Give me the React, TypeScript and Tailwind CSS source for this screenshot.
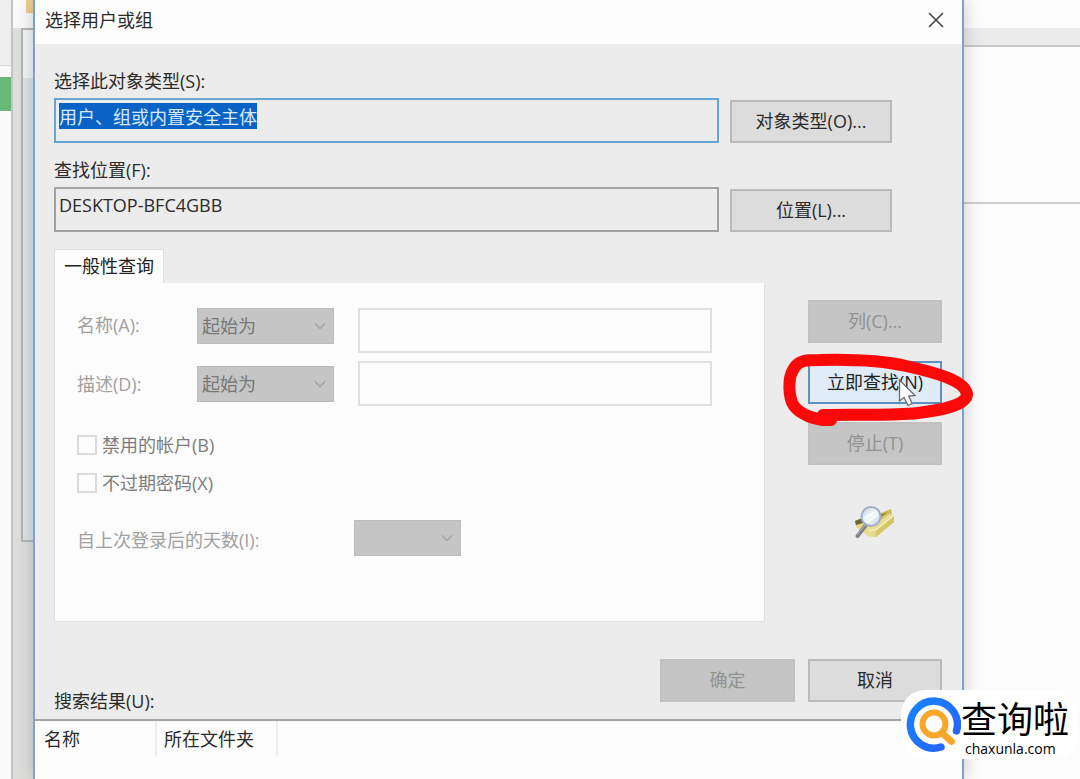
import { useEffect, useRef, type ReactNode } from "react";

const font = "font-['Open_Sans','Noto_Sans_CJK_SC',sans-serif]";

function Chevron() {
  return (
    <svg viewBox="0 0 12 8" className="pointer-events-none absolute top-1/2 right-2 h-2 w-3 -translate-y-1/2" fill="none" stroke="#a3a3a3" strokeWidth="1.3">
      <path d="M1 1.5 L6 6.5 L11 1.5" />
    </svg>
  );
}

function GreySelect({ id, value, width }: { id: string; value: string; width: string }) {
  return (
    <div className={`relative h-9 ${width}`}>
      <select id={id} disabled className="h-full w-full appearance-none border border-[#bcbcbc] bg-[#c5c5c5] pl-1 text-[18px] text-[#777777] opacity-100">
        <option>{value}</option>
      </select>
      <Chevron />
    </div>
  );
}

function PushButton({ children, disabled, hot }: { children: ReactNode; disabled?: boolean; hot?: boolean }) {
  const tone = disabled
    ? "border-[#c1c1c1] bg-[#c5c5c5] text-[#929292]"
    : hot
      ? "border-[#5f90c4] bg-[#e0ebf8] text-[#222222]"
      : "border-[#bababa] bg-[#dcdcdc] text-[#2b2b2b]";
  return (
    <button type="button" disabled={disabled} className={`flex h-[43px] w-full items-center justify-center border-2 pb-px text-[18px] leading-6 ${tone}`}>
      {children}
    </button>
  );
}

function FindIcon() {
  return (
    <svg viewBox="0 0 42 36" className="h-9 w-[42px]">
      <defs>
        <linearGradient id="gold" x1="0" y1="0" x2="1" y2="1">
          <stop offset="0" stopColor="#f4efb4" />
          <stop offset="1" stopColor="#d8c96c" />
        </linearGradient>
        <linearGradient id="lens" x1="0" y1="0" x2="1" y2="1">
          <stop offset="0" stopColor="#c4d4ee" />
          <stop offset="0.5" stopColor="#f1f8fb" />
          <stop offset="1" stopColor="#bccfdd" />
        </linearGradient>
      </defs>
      <path d="M1 16 L12 12 L31 8 L37 4 L40 16 L22 32 L14 31 L2 22 Z" fill="#e2d98c" />
      <path d="M1 16 L8 13 L9 18 L2 20 Z" fill="#6d6630" />
      <path d="M24 9 L37 4 L38 8 L22 20 Z" fill="#d0be58" />
      <path d="M25 10 L34 7 L24 14 Z" fill="#8a7f42" />
      <path d="M14 25 L35 9 L40 11 L40 17 L22 32 L14 31 Z" fill="url(#gold)" />
      <path d="M22 25 L40 11 L40 17 L22 32 Z" fill="#d6c766" />
      <path d="M14 25 L22 25 L39 11" fill="none" stroke="#f8f3c4" strokeWidth="1.2" />
      <path d="M12 20 L3.500 31" stroke="#808088" strokeWidth="4" strokeLinecap="round" />
      <path d="M11 20 L3 30" stroke="#b8b8c0" strokeWidth="1" />
      <circle cx="17" cy="11.500" r="9.500" fill="url(#lens)" stroke="#a3afc8" strokeWidth="2" />
      <path d="M11 13 L20 7 M14 17 L23 10" stroke="#ffffff" strokeWidth="1.5" />
    </svg>
  );
}

function HighlightMark() {
  return (
    <svg viewBox="778 345 200 90" className="pointer-events-none absolute -top-4 -left-[30px] z-10 h-[90px] w-[200px]" fill="none">
      <path
        d="M831 420 C815 421 800 414 794 406 C788 397 788 378 793 370 C798 360 806 360 820 360 C860 359 884 361 906 366 C938 373 965 381 967 394 C967 405 942 410 918 413 C890 416 861 414 823 415"
        stroke="#fb0808"
        strokeWidth="12"
        strokeLinecap="round"
        strokeLinejoin="round"
      />
      <path d="M899.500 380 L899.500 401 L904 397.500 L908 405.500 L912 403.600 L908.800 396 L915 395.500 Z" fill="#ffffff" stroke="#6b6b6b" strokeWidth="1.3" />
    </svg>
  );
}

function SiteBadge() {
  return (
    <div className="absolute right-[3px] bottom-5 z-20 flex h-[69px] w-[176px] items-center rounded-[24px] bg-white pl-1">
      <svg viewBox="0 0 56 58" className="h-[58px] w-14 shrink-0" fill="none" strokeLinecap="round">
        <defs>
          <linearGradient id="ring" x1="0" y1="0" x2="1" y2="1">
            <stop offset="0" stopColor="#1683fb" />
            <stop offset="1" stopColor="#2862ff" />
          </linearGradient>
        </defs>
        <path d="M36 51 A23.500 23.500 0 1 1 51.500 35" stroke="url(#ring)" strokeWidth="7.500" />
        <circle cx="29" cy="28" r="11.500" stroke="#f9a62b" strokeWidth="6" />
        <path d="M37 37 L46.500 45.500" stroke="#f9a62b" strokeWidth="7" />
      </svg>
      <div className="flex flex-col self-start pt-[11px] font-['Liberation_Sans','Noto_Sans_CJK_SC',sans-serif] text-black">
        <span className="text-[36px] leading-[40px] whitespace-nowrap">查询啦</span>
        <span className="pl-1 font-['Open_Sans',sans-serif] text-[14px] leading-4 font-medium">chaxunla.com</span>
      </div>
    </div>
  );
}

function LeftBackdrop() {
  return (
    <div className="flex w-[33px] shrink-0">
      <div className="flex w-[11px] flex-col bg-[#fafafa]">
        <div className="h-[66px] border-b border-[#d8d8d8] bg-[#eeeeee]" />
        <div className="mt-[11px] h-[34px] bg-[#69b878]" />
      </div>
      <div className="flex flex-1 flex-col border-l-2 border-[#c4c4c4] bg-[#dededc]">
        <div className="flex h-7 justify-end bg-[#fafafa]">
          <div className="h-[13px] w-[7px] bg-[#edd08c]" />
        </div>
        <div className="ml-2 h-[514px] border-t-2 border-b-2 border-l-2 border-[#b4b4b4] bg-[#dde2e5]">
          <div className="h-12 bg-[#f3f5f6]" />
        </div>
      </div>
    </div>
  );
}

function RightBackdrop() {
  return (
    <div className="flex w-[116px] shrink-0 flex-col bg-[#fcfcfc]">
      <div className="mt-7 h-[19px] border-b-2 border-[#c6c6c6] bg-[#ebebeb]" />
      <div className="h-[157px] border-b-2 border-[#cccccc]" />
    </div>
  );
}

export default function App() {
  const typeRef = useRef<HTMLInputElement>(null);
  useEffect(() => {
    typeRef.current?.focus();
    typeRef.current?.select();
  }, []);

  return (
    <div className={`relative flex min-h-screen overflow-hidden bg-[#fcfcfc] text-[18px] leading-6 text-[#2b2b2b] ${font}`}>
      <LeftBackdrop />
      <main className="z-10 flex min-w-0 flex-1 flex-col border-x-2 border-[#79a3c8] bg-[#ececec] shadow-[0_0_16px_rgba(70,80,90,0.3)]">
        <header className="flex h-11 items-center justify-between bg-[#fdfdfd] pr-4 pb-1 pl-[10px]">
          <h1>选择用户或组</h1>
          <button type="button" aria-label="关闭" className="flex h-6 w-5 items-center justify-center">
            <svg viewBox="0 0 16 16" className="h-4 w-4" stroke="#444444" strokeWidth="1.6">
              <path d="M1 1 L15 15 M15 1 L1 15" />
            </svg>
          </button>
        </header>

        <form className="flex flex-col pt-[25px] pr-5 pl-[19px]">
          <div className="grid grid-cols-[1fr_162px] gap-x-[11px] pr-[50px]">
            <label htmlFor="types" className="col-span-2 mb-[5px]">选择此对象类型(S):</label>
            <input
              id="types"
              ref={typeRef}
              readOnly
              defaultValue="用户、组或内置安全主体"
              className="h-[45px] min-w-0 border-2 border-[#64a5d2] bg-[#ececec] pt-[3px] pb-[13px] pl-[3px] leading-[25px] outline-none selection:bg-[#0963c7] selection:text-[#d8eaff]"
            />
            <div className="self-end"><PushButton>对象类型(O)...</PushButton></div>
            <label htmlFor="place" className="col-span-2 mt-[15px] mb-[5px]">查找位置(F):</label>
            <input
              id="place"
              readOnly
              defaultValue="DESKTOP-BFC4GBB"
              className="h-[45px] min-w-0 border-2 border-[#a2a2a2] bg-[#ececec] pt-[3px] pb-[13px] pl-[3px] leading-[25px] outline-none"
            />
            <div className="self-end"><PushButton>位置(L)...</PushButton></div>
          </div>

          <div className="mt-[17px] flex gap-[43px]">
            <div className="flex min-w-0 flex-1 flex-col">
              <button type="button" className="h-[34px] w-[110px] border border-b-0 border-[#e0e0e0] bg-[#fdfdfd] pb-px text-[#222222]">
                一般性查询
              </button>
              <div className="flex flex-col border border-t-0 border-[#e0e0e0] bg-[#fcfcfc] pt-[25px] pr-[52px] pb-[65px] pl-[22px] text-[#a0a0a0]">
                <div className="flex items-start">
                  <label htmlFor="name-op" className="w-[120px] pt-[5px]">名称(A):</label>
                  <GreySelect id="name-op" value="起始为" width="w-[137px]" />
                  <input aria-label="名称" disabled className="ml-6 h-[45px] min-w-0 flex-1 border-2 border-[#e0e0e0] bg-[#fdfdfd]" />
                </div>
                <div className="mt-2 flex items-center">
                  <label htmlFor="desc-op" className="w-[120px]">描述(D):</label>
                  <GreySelect id="desc-op" value="起始为" width="w-[137px]" />
                  <input aria-label="描述" disabled className="ml-6 h-[45px] min-w-0 flex-1 border-2 border-[#e0e0e0] bg-[#fdfdfd]" />
                </div>
                <div className="mt-5 flex flex-col text-[#7c7c7c]">
                  <label className="flex h-[38px] items-center gap-[5px]">
                    <input type="checkbox" disabled className="h-5 w-5 appearance-none border-2 border-[#dadada] bg-[#fdfdfd]" />
                    禁用的帐户(B)
                  </label>
                  <label className="flex h-[38px] items-center gap-[5px]">
                    <input type="checkbox" disabled className="h-5 w-5 appearance-none border-2 border-[#dadada] bg-[#fdfdfd]" />
                    不过期密码(X)
                  </label>
                </div>
                <div className="mt-[18px] flex items-end">
                  <label htmlFor="days" className="w-[277px] pb-1">自上次登录后的天数(I):</label>
                  <GreySelect id="days" value="" width="w-[107px]" />
                </div>
              </div>
            </div>

            <div className="flex w-[134px] flex-col gap-[18px] pt-[51px]">
              <PushButton disabled>列(C)...</PushButton>
              <div className="relative">
                <PushButton hot>立即查找(N)</PushButton>
                <HighlightMark />
              </div>
              <PushButton disabled>停止(T)</PushButton>
              <div className="flex justify-center pt-[22px]"><FindIcon /></div>
            </div>
          </div>

          <div className="mt-[37px] flex justify-between">
            <h2 id="results-title" className="pt-[30px]">搜索结果(U):</h2>
            <div className="flex gap-[13px]">
              <div className="w-[135px]"><PushButton disabled>确定</PushButton></div>
              <div className="w-[134px]"><PushButton>取消</PushButton></div>
            </div>
          </div>
        </form>

        <div className="mt-[6px] flex-1 border-t-2 border-[#a4a4a4] bg-[#fcfcfc]">
          <table aria-labelledby="results-title" className="border-separate border-spacing-0 text-left">
            <thead>
              <tr className="h-[35px]">
                <th scope="col" className="w-[122px] border-r-2 border-[#ededed] pl-[9px] font-normal">名称</th>
                <th scope="col" className="w-[121px] border-r-2 border-[#ededed] pl-[7px] font-normal">所在文件夹</th>
              </tr>
            </thead>
          </table>
        </div>
      </main>
      <RightBackdrop />
      <SiteBadge />
    </div>
  );
}
